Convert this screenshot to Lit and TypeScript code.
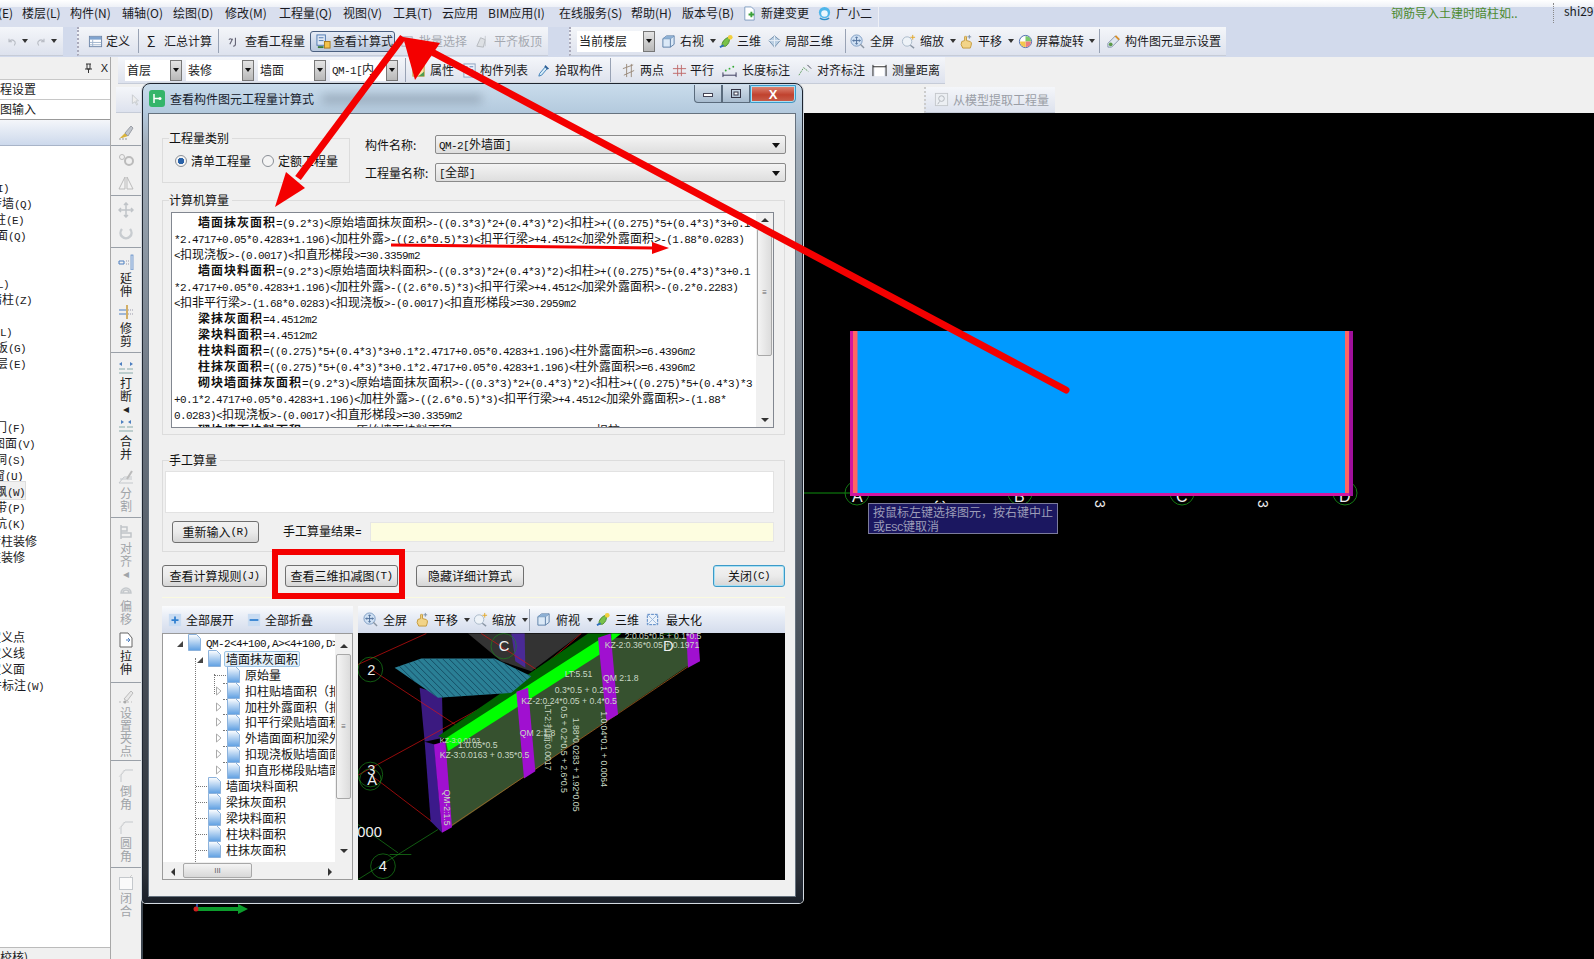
import { LitElement, html, svg, css } from "lit";
import { customElement } from "lit/decorators.js";

const CJK = css`"Noto Sans CJK SC", "Liberation Sans", sans-serif`;

// half-width latin runs, the old dialogs use a fixed 6px advance
const latCss = css`
  .lat {
    font-family: "Liberation Mono", monospace;
    font-size: 11px;
    letter-spacing: -0.6px;
  }
`;
const mixed = (s: string) =>
  s.split(/([\x20-\x7e]+)/).map((p, i) => (i % 2 ? html`<span class="lat">${p}</span>` : p));

const ic = (body: unknown, size = 16) =>
  html`<svg width=${size} height=${size} viewBox="0 0 16 16" style="flex:none">${body}</svg>`;

const icons: Record<string, unknown> = {
  table: svg`<rect x="1.5" y="2.5" width="13" height="11" fill="#fff" stroke="#6d86a8"/><rect x="2" y="3" width="12" height="3" fill="#7fa3cf"/><path d="M5 6v7M2 9h12M2 11.500h12" stroke="#9db2cc"/>`,
  calc: svg`<path d="M3 11l3-6M2 6q2-2 3 0M9 4v7q0 2-2.500 2" fill="none" stroke="#667" stroke-width="1.200"/>`,
  sheet: svg`<rect x="1" y="1" width="9" height="11" fill="#dfe8f5" stroke="#4d78b0"/><path d="M3 4h5M3 7h5" stroke="#4d78b0"/><rect x="9" y="8" width="6" height="7" fill="#f3c24b" stroke="#a87a1c"/><path d="M2 14h6" stroke="#3a7a3a" stroke-width="2"/>`,
  batch: svg`<rect x="2" y="3" width="11" height="10" fill="#e4e7ec" stroke="#aab"/><path d="M4 6h7M4 9h7" stroke="#bbc"/>`,
  align: svg`<path d="M3 13l4-9 5 2-2 8z" fill="#dde0e4" stroke="#b4b8bd"/><path d="M12 2v11" stroke="#c8ccd0"/>`,
  cube: svg`<path d="M2 5l4-3h8v9l-4 3H2z" fill="#dbe9f7" stroke="#5c7fa6"/><path d="M2 5h8v9M10 5l4-3" fill="none" stroke="#5c7fa6"/><path d="M2 5l4-3h8l-4 3z" fill="#8db0d4"/>`,
  tree3d: svg`<path d="M3 13q0-7 8-10 1 7-4 10z" fill="#78c24a" stroke="#4a8a2a"/><circle cx="12" cy="3.500" r="2.500" fill="#f2cf3e"/><path d="M1 14l4-2" stroke="#2f6fc0" stroke-width="2"/>`,
  diamond: svg`<path d="M8 2l6 5-6 7-6-7z" fill="#b9cee2" stroke="#7390ad"/><path d="M2 7h12M8 2v12" stroke="#e8f0f7"/>`,
  full: svg`<circle cx="7" cy="7" r="6" fill="#cfe0f3" stroke="#7d9cc2"/><path d="M7 3v8M3 7h8M5.800 4.200L7 3l1.200 1.200M5.800 9.800L7 11l1.200-1.200M4.200 5.800L3 7l1.200 1.200M9.800 5.800L11 7l-1.200 1.200" fill="none" stroke="#4f6f9a"/><path d="M11 11l4 4" stroke="#8a96a4" stroke-width="1.500"/>`,
  zoom: svg`<circle cx="6.500" cy="8" r="5" fill="#eef3f8" stroke="#a8b8c8"/><path d="M10 12l4 3" stroke="#8a96a4" stroke-width="1.500"/><path d="M12.500 1v5M10 3.500h5" stroke="#e2a72a"/>`,
  hand: svg`<path d="M4 15q-3-4-1-7l3-1V3q1-2 2 0v4l4 1q2 1 1 4l-1 3z" fill="#f2d488" stroke="#c49a3c"/><path d="M11 1v4M9 3h4" stroke="#7a8fa8"/>`,
  spin: svg`<circle cx="8" cy="8" r="6.500" fill="#fff" stroke="#46a"/><path d="M8 2a6 6 0 0 1 6 6H8z" fill="#7bc96a"/><path d="M14 8a6 6 0 0 1-6 6V8z" fill="#ec7f7f"/><path d="M8 14a6 6 0 0 1-6-6h6z" fill="#f3c84f"/>`,
  show: svg`<path d="M2 10l8-8 4 4-8 8H2z" fill="#dfe6f0" stroke="#8394ab"/><path d="M10 2l4 4" stroke="#d8902c" stroke-width="2"/><circle cx="5" cy="11" r="2" fill="#5b9a4a"/>`,
  attr: svg`<rect x="2" y="2" width="12" height="12" fill="#f6e3a8" stroke="#c29a3a"/><path d="M4 5h8M4 8h5" stroke="#b07a20"/><path d="M8 14l6-5v5z" fill="#4f9d4f"/>`,
  list: svg`<rect x="2" y="1" width="12" height="14" fill="#eef3fa" stroke="#8aa0bd"/><path d="M4 4h2M8 4h4M4 7h2M8 7h4M4 10h2M8 10h4" stroke="#5a82b8"/>`,
  pick: svg`<path d="M3 14l1-3 6-7 2 2-6 7z" fill="#d7ecf8" stroke="#3f7fb8"/><path d="M10 2l4 4-2 1-3-3z" fill="#2d5f96"/>`,
  twop: svg`<path d="M2 6l11-4M3 13L14 8M6 1v14M11 1v14" stroke="#9a8a7a"/>`,
  para: svg`<path d="M1 6h14M1 11h14M6 2v12M10 2v12" stroke="#c06a6a"/>`,
  len: svg`<path d="M1 13h14M1 10v5M15 10v5" stroke="#335"/><circle cx="4" cy="8" r="1" fill="#3a3"/><circle cx="8" cy="6" r="1" fill="#3a3"/><circle cx="12" cy="4" r="1" fill="#3a3"/>`,
  alignm: svg`<path d="M1 13l5-8 5 4" fill="none" stroke="#5a9a5a" stroke-dasharray="2 1"/><path d="M10 2l4 4" stroke="#445"/>`,
  meas: svg`<rect x="3" y="2" width="10" height="12" fill="#fff"/><path d="M1 2v12M15 2v12M1 4h14" stroke="#222"/>`,
  cursor: svg`<path d="M5 2v10l3-2 2 4 1-1-2-4h3z" fill="#eee" stroke="#c4c8cc"/>`,
  model: svg`<rect x="1.500" y="1.500" width="13" height="13" fill="#eceff3" stroke="#c4c8cc"/><circle cx="8" cy="7" r="3" fill="none" stroke="#b0b4ba"/><path d="M6 10l-2 3" stroke="#b0b4ba"/>`,
  undo: svg`<path d="M4 5v4h4M4 9q4-5 8 0q1 2-1 5" fill="none" stroke="#b8bcc4" stroke-width="1.500"/>`,
  redo: svg`<path d="M12 5v4H8M12 9q-4-5-8 0q-1 2 1 5" fill="none" stroke="#b8bcc4" stroke-width="1.500"/>`,
  newdoc: svg`<path d="M3 1h7l3 3v11H3z" fill="#fff" stroke="#7f9cc0"/><path d="M7 9h6M10 6v6" stroke="#3aa03a" stroke-width="2"/>`,
  bot: svg`<circle cx="8" cy="7" r="6" fill="#4fb6ea"/><circle cx="8" cy="8" r="3.500" fill="#eaf7fd"/><path d="M3 13q5 3 10 0" stroke="#2c8fc8" fill="none" stroke-width="1.500"/>`,
  plus: svg`<rect x="1" y="1" width="14" height="14" fill="#c9dcf2"/><path d="M8 4v8M4 8h8" stroke="#2f7fd0" stroke-width="2"/>`,
  minus: svg`<rect x="1" y="1" width="14" height="14" fill="#c9dcf2"/><path d="M3 8h10" stroke="#2f7fd0" stroke-width="2"/>`,
  max: svg`<rect x="2.500" y="2.500" width="11" height="11" fill="#eaf1fa" stroke="#4d7fc0" stroke-dasharray="3 1"/><path d="M3 3l10 10M13 3L3 13" stroke="#9ab8dc"/>`,
  // side strip
  brush: svg`<path d="M2 14l5-5 3 3-6 2z" fill="#d8b23c"/><path d="M7 9l6-7 2 2-5 8z" fill="#c2c6cc" stroke="#9a9ea6"/><path d="M1 15h8" stroke="#999" stroke-dasharray="2 1"/>`,
  oo: svg`<circle cx="4" cy="5" r="2.500" fill="none" stroke="#bbb"/><circle cx="11" cy="9" r="4" fill="none" stroke="#bbb" stroke-width="2"/>`,
  mirror: svg`<path d="M7 2v12L1 14zM9 2v12h6z" fill="#f2f2f2" stroke="#bbb"/>`,
  move: svg`<path d="M8 1v14M1 8h14M6 3l2-2 2 2M6 13l2 2 2-2M3 6L1 8l2 2M13 6l2 2-2 2" fill="none" stroke="#c0c4c8" stroke-width="1.500"/>`,
  rot: svg`<path d="M4 5a5.500 5.500 0 1 0 8 0" fill="none" stroke="#c8ccd0" stroke-width="2.500"/>`,
  extend: svg`<path d="M1 7h5v3H1z" fill="none" stroke="#4d7fc0"/><path d="M8 7h4M8 10h4" stroke="#99a" stroke-dasharray="1 1"/><rect x="13" y="1" width="2" height="15" fill="#dfe8f4" stroke="#4d7fc0" stroke-width=".7"/>`,
  trim: svg`<path d="M1 6h7M1 10h7" stroke="#4d7fc0"/><path d="M9 1v14" stroke="#c89a3a" stroke-width="1.500"/><path d="M10 6h5M10 10h5" stroke="#99a" stroke-dasharray="1 1"/>`,
  brk: svg`<path d="M1 10h6M9 10h6M1 14h14" stroke="#8aa"/><path d="M1 5l3-2v4zM15 5l-3-2v4z" fill="#4d7fc0"/>`,
  join: svg`<path d="M1 10h6M9 10h6M1 14h14" stroke="#8aa"/><path d="M6 5L3 3v4zM10 5l3-2v4z" fill="#4d7fc0"/>`,
  split: svg`<path d="M1 14l5-6h8M2 10h12M1 14h14" fill="none" stroke="#c4c8cc"/><path d="M9 10l5-8" stroke="#bbb" stroke-width="2"/>`,
  al: svg`<path d="M3 1v14M3 3h6v4H3zM3 9h10v4H3z" fill="none" stroke="#c0c4c8" stroke-width="1.500"/>`,
  off: svg`<path d="M3 11a5 5 0 1 1 10 0zM5 11a3 3 0 1 1 6 0z" fill="none" stroke="#c4c8cc" stroke-width="1.500"/>`,
  stretch: svg`<path d="M2 1h8l4 5v9H2z" fill="#fff" stroke="#666"/><path d="M8 8h4M10 6l2 2-2 2" stroke="#4d7fc0" fill="none"/>`,
  grip: svg`<path d="M6 10L13 2l2 2-6 8z" fill="#e8e8e8" stroke="#bbb"/><path d="M1 13h13" stroke="#bbb" stroke-dasharray="2 2"/><circle cx="7" cy="13" r="1.500" fill="#aaa"/>`,
  corner: svg`<path d="M3 15V8l4-5h8" fill="none" stroke="#c4c8cc"/><path d="M1 10l5-7" stroke="#ddd"/>`,
  closed: svg`<rect x="1.500" y="3.500" width="13" height="12" fill="#fafafa" stroke="#c4c8cc"/><path d="M11 4l3-3" stroke="#ccc"/>`,
};

const doc = html`<svg width="13" height="17" viewBox="0 0 13 17" style="flex:none">
  <defs><linearGradient id="d" x1="0" y1="0" x2="0" y2="1"><stop offset="0" stop-color="#fff"/><stop offset="1" stop-color="#5e9fe2"/></linearGradient></defs>
  <path d="M.5.5h8l4 4v12H.5z" fill="url(#d)" stroke="#8cb2dc"/>
</svg>`;

const MENU: [number, string][] = [
  [-26, "编辑(E)"], [22, "楼层(L)"], [70, "构件(N)"], [122, "辅轴(O)"], [173, "绘图(D)"], [225, "修改(M)"],
  [279, "工程量(Q)"], [343, "视图(V)"], [393, "工具(T)"], [442, "云应用"], [488, "BIM应用(I)"],
  [559, "在线服务(S)"], [631, "帮助(H)"], [682, "版本号(B)"],
];

type Tool = { x: number; i?: string; t?: string; off?: boolean; drop?: boolean; sep?: boolean; on?: boolean; s?: string; tx?: number };

const TB2: Tool[] = [
  { x: 88, i: "table", t: "定义", tx: 106 },
  { x: 138, sep: true },
  { x: 147, s: "Σ", t: "汇总计算", tx: 164 },
  { x: 218, sep: true },
  { x: 227, i: "calc", t: "查看工程量", tx: 245 },
  { x: 310, i: "sheet", t: "查看计算式", on: true, tx: 327 },
  { x: 400, i: "batch", t: "批量选择", off: true, tx: 419 },
  { x: 474, i: "align", t: "平齐板顶", off: true, tx: 494 },
];
const TB3: Tool[] = [
  { x: 661, i: "cube", t: "右视", drop: true, tx: 680 },
  { x: 719, i: "tree3d", t: "三维", tx: 737 },
  { x: 767, i: "diamond", t: "局部三维", tx: 785 },
  { x: 845, sep: true },
  { x: 850, i: "full", t: "全屏", tx: 870 },
  { x: 901, i: "zoom", t: "缩放", drop: true, tx: 920 },
  { x: 959, i: "hand", t: "平移", drop: true, tx: 978 },
  { x: 1018, i: "spin", t: "屏幕旋转", drop: true, tx: 1036 },
  { x: 1099, sep: true },
  { x: 1106, i: "show", t: "构件图元显示设置", tx: 1125 },
];
const TB4: Tool[] = [
  { x: 405, sep: true },
  { x: 411, i: "attr", t: "属性", tx: 430 },
  { x: 462, i: "list", t: "构件列表", tx: 480 },
  { x: 536, i: "pick", t: "拾取构件", tx: 555 },
  { x: 610, sep: true },
  { x: 621, i: "twop", t: "两点", tx: 640 },
  { x: 672, i: "para", t: "平行", tx: 690 },
  { x: 722, i: "len", t: "长度标注", tx: 742 },
  { x: 798, i: "alignm", t: "对齐标注", tx: 817 },
  { x: 872, i: "meas", t: "测量距离", tx: 892 },
];
const TB3D: Tool[] = [
  { x: 363, i: "full", t: "全屏", tx: 383 },
  { x: 415, i: "hand", t: "平移", drop: true, tx: 434 },
  { x: 473, i: "zoom", t: "缩放", drop: true, tx: 492 },
  { x: 529, sep: true },
  { x: 536, i: "cube", t: "俯视", drop: true, tx: 556 },
  { x: 596, i: "tree3d", t: "三维", tx: 615 },
  { x: 645, i: "max", t: "最大化", tx: 666 },
];

const toolRow = (items: Tool[], end: number) =>
  items.map((it, n) => {
    const w = (items[n + 1]?.x ?? end) - it.x - (it.on ? 5 : 0);
    if (it.sep) return html`<span class="tsep" style="width:${w}px"></span>`;
    const gap = (it.tx ?? it.x + 18) - it.x - (it.s ? 10 : 15);
    return html`<span class="tool ${it.off ? "off" : ""} ${it.on ? "on" : ""}" style="width:${w}px;gap:${gap}px">
      ${it.i ? ic(icons[it.i], 15) : html`<span class="sig">${it.s}</span>`}
      <span>${it.t}</span>${it.drop ? html`<i class="caret"></i>` : ""}
    </span>`;
  });

// [text, left offset] for the tree that is scrolled off the left edge of the panel
const NAV: [string, number][] = [
  ["柱(I)", -21], ["砖墙(Q)", -10], ["柱(E)", -6], ["墙面(Q)", -16], ["", 0], ["", 0],
  ["梁(L)", -21], ["暗柱(Z)", -10], ["", 0], ["板(L)", -18], ["板(G)", -4], ["层(E)", -4],
  ["", 0], ["", 0], ["", 0], ["门(F)", -5], ["图面(V)", -7], ["洞(S)", -5], ["窗(U)", -7],
  ["飘(W)", -5], ["带(P)", -5], ["坑(K)", -5], ["砖柱装修", -11], ["柱装修", -11],
  ["", 0], ["", 0], ["", 0], ["", 0],
  ["自定义点", -23], ["自定义线", -23], ["自定义面", -23], ["构件标注(W)", -22],
];

// strip tools: y start, icon, label, dark text, rule under it
const STRIP: [number, string, string, boolean, boolean][] = [
  [118, "brush", "", false, true],
  [146, "oo", "", false, false],
  [169, "mirror", "", false, true],
  [196, "move", "", false, false],
  [218, "rot", "", false, true],
  [248, "extend", "延伸", true, false],
  [298, "trim", "修剪", true, true],
  [353, "brk", "打断◂", true, false],
  [411, "join", "合并", true, false],
  [463, "split", "分割", false, true],
  [518, "al", "对齐◂", false, false],
  [576, "off", "偏移", false, false],
  [626, "stretch", "拉伸", true, true],
  [683, "grip", "设置夹点", false, true],
  [761, "corner", "倒角", false, false],
  [813, "corner", "圆角", false, true],
  [868, "closed", "闭合", false, false],
];

const caretSvg = (d: string) => html`<svg width="8" height="8" viewBox="0 0 8 8"><path d=${d} fill="#333"/></svg>`;

const FORMULA: { b?: string; t: string }[] = [
  { b: "墙面抹灰面积", t: "=(9.2*3)<原始墙面抹灰面积>-((0.3*3)*2+(0.4*3)*2)<扣柱>+((0.275)*5+(0.4*3)*3+0.1" },
  { t: "*2.4717+0.05*0.4283+1.196)<加柱外露>-((2.6*0.5)*3)<扣平行梁>+4.4512<加梁外露面积>-(1.88*0.0283)" },
  { t: "<扣现浇板>-(0.0017)<扣直形梯段>=30.3359m2" },
  { b: "墙面块料面积", t: "=(9.2*3)<原始墙面块料面积>-((0.3*3)*2+(0.4*3)*2)<扣柱>+((0.275)*5+(0.4*3)*3+0.1" },
  { t: "*2.4717+0.05*0.4283+1.196)<加柱外露>-((2.6*0.5)*3)<扣平行梁>+4.4512<加梁外露面积>-(0.2*0.2283)" },
  { t: "<扣非平行梁>-(1.68*0.0283)<扣现浇板>-(0.0017)<扣直形梯段>=30.2959m2" },
  { b: "梁抹灰面积", t: "=4.4512m2" },
  { b: "梁块料面积", t: "=4.4512m2" },
  { b: "柱块料面积", t: "=((0.275)*5+(0.4*3)*3+0.1*2.4717+0.05*0.4283+1.196)<柱外露面积>=6.4396m2" },
  { b: "柱抹灰面积", t: "=((0.275)*5+(0.4*3)*3+0.1*2.4717+0.05*0.4283+1.196)<柱外露面积>=6.4396m2" },
  { b: "砌块墙面抹灰面积", t: "=(9.2*3)<原始墙面抹灰面积>-((0.3*3)*2+(0.4*3)*2)<扣柱>+((0.275)*5+(0.4*3)*3" },
  { t: "+0.1*2.4717+0.05*0.4283+1.196)<加柱外露>-((2.6*0.5)*3)<扣平行梁>+4.4512<加梁外露面积>-(1.88*" },
  { t: "0.0283)<扣现浇板>-(0.0017)<扣直形梯段>=30.3359m2" },
  { b: "砌块墙面块料面积", t: "=(9.2*3)<原始墙面块料面积>-((0.3*3)*2+(0.4*3)*2)<扣柱>+((0.275)*5+(0.4*3)*3" },
];

const TREE: { l: number; t: string; exp?: string; cur?: boolean }[] = [
  { l: 0, t: "QM-2<4+100,A><4+100,D>", exp: "open" },
  { l: 1, t: "墙面抹灰面积", exp: "open", cur: true },
  { l: 2, t: "原始量" },
  { l: 2, t: "扣柱贴墙面积（扣", exp: "closed" },
  { l: 2, t: "加柱外露面积（扣", exp: "closed" },
  { l: 2, t: "扣平行梁贴墙面积", exp: "closed" },
  { l: 2, t: "外墙面面积加梁外", exp: "closed" },
  { l: 2, t: "扣现浇板贴墙面面", exp: "closed" },
  { l: 2, t: "扣直形梯段贴墙面", exp: "closed" },
  { l: 1, t: "墙面块料面积" },
  { l: 1, t: "梁抹灰面积" },
  { l: 1, t: "梁块料面积" },
  { l: 1, t: "柱块料面积" },
  { l: 1, t: "柱抹灰面积" },
];

const stairs = Array.from({ length: 24 }, (_, n) => n);

// 3d preview, coordinates read off the reference at 3x
const scene = html`<svg class="scene" viewBox="10 87 1281 738" font-family="Liberation Sans, sans-serif">
  <defs><clipPath id="st"><path d="M120 190L200 162H420L530 215 470 265 250 280Z"/></clipPath></defs>
  <path d="M340 87H680L530 200 440 170Z" fill="#333"/>
  <path d="M195 250L262 270 265 400 210 412Z" fill="#3b1a80"/>
  <path d="M470 87H510L512 190 482 170Z" fill="#4a2a96"/>
  <g stroke="#e01010" stroke-width="2" fill="none">
    <path d="M10 180L215 87M10 512L490 250 680 87M50 195L500 490M60 520L250 665M380 87L545 195M700 300L760 345"/>
  </g>
  <g stroke="#1a8a1a" stroke-width="2" fill="none">
    <circle cx="47" cy="195" r="37"/><circle cx="47" cy="510" r="37"/><circle cx="85" cy="785" r="37"/>
    <circle cx="447" cy="125" r="38"/><circle cx="940" cy="125" r="38"/><circle cx="47" cy="525" r="32"/>
    <path d="M250 675L10 825M10 660L130 745M105 750H170"/>
  </g>
  <path d="M270 410L730 100H1010L1020 170 270 680Z" fill="#36512f"/>
  <path d="M280 670L1010 180" stroke="#c06a20" stroke-width="2"/>
  <path d="M250 395L700 87H790L272 402Z" fill="#006200"/>
  <path d="M272 402L735 105 735 150 280 440Z" fill="#00ff00"/>
  <path d="M800 87L770 110V87Z" fill="#00ff00"/>
  <path d="M120 190L200 162H420L530 215 470 265 250 280Z" fill="#2a7f95"/>
  <g clip-path="url(#st)" stroke="#164f66" stroke-width="3">
    ${stairs.map((n) => svg`<path d="M${90 + n * 19} 160L${215 + n * 19} 285"/>`)}
  </g>
  <path d="M210 412L240 420 262 685 228 650Z" fill="#3b1a8a"/>
  <path d="M238 420L272 410 292 668 262 685Z" fill="#a010d0"/>
  <path d="M485 262L520 250 542 500 508 522Z" fill="#a010d0"/>
  <path d="M730 100L768 87 790 330 755 350Z" fill="#a010d0"/>
  <path d="M995 87H1030L1036 170 1000 190Z" fill="#a010d0"/>
  <g fill="#c9d8c4" font-size="26">
    <text x="255" y="415" font-size="22">KZ-3:0.0163</text>
    <text x="310" y="431">1:0.05*0.5</text>
    <text x="255" y="461">KZ-3:0.0163 + 0.35*0.5</text>
    <text x="495" y="395">QM 2:1.8</text>
    <text x="500" y="298">KZ-2:0.24*0.05 + 0.4*0.5</text>
    <text x="745" y="230">QM 2:1.8</text>
    <text x="600" y="266">0.3*0.5 + 0.2*0.5</text>
    <text x="630" y="216">LT:5.51</text>
    <text x="750" y="130">KZ-2:0.36*0.05 + 0.1971</text>
    <text x="810" y="102">2:0.05*0.5 + 0.1*0.5</text>
    <text transform="translate(268 555) rotate(90)">QM-2:1.5</text>
    <text transform="translate(572 300) rotate(90)">LT-2:扣面:0.0017</text>
    <text transform="translate(618 305) rotate(90)">0.5 + 0.2*0.5 + 2.6*0.5</text>
    <text transform="translate(655 340) rotate(90)">1.88*0.0283 + 1.92*0.05</text>
    <text transform="translate(738 320) rotate(90)">1.0:04*0.1 + 0.0064</text>
  </g>
  <g fill="#f0f0f0" font-size="44">
    <text x="8" y="698">000</text><text x="38" y="211">2</text><text x="38" y="512">3</text>
    <text x="38" y="540">A</text><text x="72" y="800">4</text><text x="432" y="138">C</text><text x="925" y="138">D</text>
  </g>
</svg>`;

@customElement("calc-dialog")
export class CalcDialog extends LitElement {
  static styles = [
    latCss,
    css`
      :host {
        display: block;
        width: 661px;
        height: 820px;
        box-sizing: border-box;
        border: 1px solid #1e2530;
        border-radius: 8px 8px 4px 4px;
        padding: 0 6px 5px 5px;
        background: linear-gradient(180deg, #c9dcec 0, #b4cade 28px, #a2aeba 60px, #6c7682 320px, #2a3038 790px, #1a1f28 100%);
        box-shadow: 0 0 0 1px #d4dae0;
        font: 12px/16px ${CJK};
        color: #111;
      }
      * {
        box-sizing: border-box;
      }
    `,
    css`
      .title {
        height: 29px;
        display: flex;
        align-items: center;
        font-size: 12px;
        color: #16202c;
      }
      .logo {
        margin: 0 5px 0 1px;
      }
      .smear {
        width: 160px;
        height: 10px;
        margin-left: 8px;
        background: #8797a8;
        filter: blur(5px);
        opacity: 0.6;
      }
      .wbtns {
        margin-left: auto;
        align-self: flex-start;
        margin-top: 1px;
        display: flex;
        height: 18px;
      }
      .wb {
        width: 28px;
        border: 1px solid #5a6b7c;
        border-top: none;
        background: linear-gradient(180deg, #d4e0ec, #a8bccf);
        display: flex;
        align-items: center;
        justify-content: center;
      }
      .wb.min {
        border-radius: 0 0 0 4px;
      }
      .wb.close {
        width: 46px;
        border-radius: 0 0 4px 0;
        background: linear-gradient(180deg, #e08a78, #c0422e 55%, #c8604c);
        color: #fff;
        font: bold 13px "Liberation Sans", sans-serif;
      }
      .inner {
        height: 784px;
        background: #f0f0f0;
        border: 1px solid #66727e;
        padding: 21px 10px 0 13px;
      }
      .head {
        display: flex;
        height: 47px;
      }
      .group {
        position: relative;
        border: 1px solid #dcdcdc;
      }
      .legend {
        position: absolute;
        left: 6px;
        top: -9px;
        background: #f0f0f0;
        padding-right: 3px;
      }
      .kind {
        width: 188px;
        height: 45px;
        margin-top: 3px;
        display: flex;
        align-items: center;
        padding-left: 12px;
      }
      .radio {
        width: 12px;
        height: 12px;
        border-radius: 50%;
        border: 1px solid #8a8f96;
        background: #f4f4f4;
        margin-right: 4px;
        flex: none;
      }
      .radio.on {
        background: radial-gradient(circle, #2a62a8 0 3px, #f4f4f4 3.5px);
      }
      .radio.second {
        margin-left: 11px;
      }
      .fields {
        margin-left: 15px;
        flex: 1;
        display: flex;
        flex-direction: column;
        gap: 9px;
      }
      .field {
        display: flex;
        align-items: center;
        height: 19px;
        margin-right: -1px;
      }
      .field label {
        width: 70px;
      }
      .sel {
        flex: 1;
        height: 19px;
        border: 1px solid #8a8a8a;
        border-radius: 2px;
        background: linear-gradient(180deg, #f4f4f4, #dedede);
        display: flex;
        align-items: center;
        justify-content: space-between;
        padding: 0 5px 0 3px;
      }
      .tri {
        border: 4px solid transparent;
        border-top: 5px solid #111;
        margin-top: 5px;
      }
      .computer {
        margin-top: 18px;
        height: 235px;
        padding: 11px 10px 0 8px;
      }
      .formula {
        height: 216px;
        border: 1px solid #828790;
        background: #fff;
        display: flex;
      }
      .lines {
        flex: 1;
        overflow: hidden;
        padding-left: 2px;
        padding-top: 1px;
      }
      .ln {
        height: 16px;
        line-height: 16px;
        white-space: nowrap;
      }
      .ln.ind {
        padding-left: 24px;
      }
      .ln b {
        font-weight: 700;
        letter-spacing: 1px;
      }
      .vs {
        width: 17px;
        flex: none;
        background: #f0f0f0;
        display: flex;
        flex-direction: column;
        align-items: center;
      }
      .ar {
        height: 14px;
        flex: none;
        display: flex;
        align-items: center;
      }
      .thumb {
        width: 15px;
        background: linear-gradient(90deg, #f4f4f4, #dcdcdc);
        border: 1px solid #a8a8a8;
        border-radius: 2px;
        display: flex;
        align-items: center;
        justify-content: center;
        font: 8px/8px "Liberation Sans", sans-serif;
        color: #666;
      }
      .sp {
        flex: 1;
      }
      .manual {
        margin-top: 25px;
        height: 92px;
        padding: 10px 10px 0 2px;
      }
      .input {
        height: 42px;
        background: #fff;
        border: 1px solid #e2e2e2;
      }
      .result {
        display: flex;
        align-items: center;
        margin-top: 8px;
        height: 22px;
        padding-left: 7px;
      }
      .btn {
        height: 22px;
        flex: none;
        border: 1px solid #707070;
        border-radius: 3px;
        background: linear-gradient(180deg, #f2f2f2 0, #ebebeb 50%, #d6d6d6 100%);
        display: flex;
        align-items: center;
        justify-content: center;
        white-space: nowrap;
      }
      .yellow {
        flex: 1;
        height: 20px;
        margin-left: 9px;
        background: #fdfde0;
        border: 1px solid #e6e6e6;
      }
      .btns {
        margin-top: 13px;
        display: flex;
        align-items: center;
      }
      .close {
        border: 1px solid #3c9ac8;
        box-shadow: inset 0 0 0 1px #a8e0f4;
      }
      .rule {
        margin-top: 10px;
        height: 1px;
        background: #fafae0;
      }
      .lower {
        margin-top: 8px;
        display: flex;
        gap: 5px;
        height: 274px;
      }
      .tbar {
        height: 27px;
        background: linear-gradient(180deg, #fafbfd, #e8edf6 40%, #d4dcec);
        display: flex;
        align-items: center;
        flex: none;
      }
      .tool {
        display: flex;
        align-items: center;
        flex: none;
        white-space: nowrap;
      }
      .tsep {
        flex: none;
        height: 22px;
        border-left: 1px solid #9aa4b4;
      }
      .sig {
        width: 10px;
      }
      .caret {
        border: 3px solid transparent;
        border-top: 4px solid #333;
        margin: 3px 0 0 2px;
      }
      .treebox {
        width: 191px;
        display: flex;
        flex-direction: column;
      }
      .treebox .tbar {
        padding-left: 6px;
        gap: 4px;
      }
      .tree {
        flex: 1;
        border: 1px solid #9a9a9a;
        background: #fff;
        display: flex;
        flex-direction: column;
        min-height: 0;
      }
      .tree-body {
        flex: 1;
        display: flex;
        min-height: 0;
      }
      .rows {
        flex: 1;
        position: relative;
        overflow: hidden;
        padding-top: 1px;
      }
      .row {
        height: 15.900px;
        display: flex;
        align-items: center;
        white-space: nowrap;
      }
      .row.l0 {
        padding-left: 25px;
      }
      .row.l1 {
        padding-left: 45px;
      }
      .row.l2 {
        padding-left: 64px;
      }
      .exp {
        width: 0;
        position: relative;
        left: -12px;
      }
      .dash {
        position: absolute;
        left: 0;
        top: 0;
        width: 11px;
        border-top: 1px dotted #777;
      }
      .short {
        position: absolute;
        left: 8px;
        top: 0;
        width: 4px;
        border-top: 1px dotted #777;
      }
      .dots {
        position: absolute;
        border-left: 1px dotted #777;
        width: 0;
      }
      .dots.a {
        left: 32px;
        top: 24px;
        bottom: 0;
      }
      .dots.b {
        left: 51px;
        top: 40px;
        height: 20px;
      }
      .rowtxt {
        margin-left: 4px;
        padding: 0 1px;
      }
      .row.cur .rowtxt {
        border: 1px solid #9cc4e4;
        border-radius: 2px;
        background: linear-gradient(180deg, #f2f8fd, #dcecf9);
        line-height: 14px;
        margin-left: 3px;
      }
      .hs {
        height: 17px;
        background: #f0f0f0;
        display: flex;
        align-items: center;
        flex: none;
      }
      .hthumb {
        width: 69px;
        height: 15px;
        margin-left: 6px;
        background: linear-gradient(180deg, #f4f4f4, #d8d8d8);
        border: 1px solid #a8a8a8;
        border-radius: 2px;
        font: 8px/13px "Liberation Sans", sans-serif;
        color: #666;
        text-align: center;
      }
      .preview {
        flex: 1;
        display: flex;
        flex-direction: column;
      }
      .preview .tbar {
        padding-left: 5px;
      }
      .scene {
        display: block;
        width: 427px;
        height: 247px;
        background: #000;
      }
    `,
  ];

  render() {
    return html`
      <div class="title">
        <svg class="logo" width="16" height="17" viewBox="0 0 16 17">
          <rect width="16" height="17" rx="3" fill="#35b56a" />
          <path d="M5 4v9M5 8.500h5" stroke="#fff" stroke-width="1.500" />
          <circle cx="11" cy="8.500" r="1.500" fill="#fff" />
        </svg>
        查看构件图元工程量计算式
        <span class="smear"></span>
        <div class="wbtns">
          <div class="wb min"><svg width="10" height="6"><rect x=".5" y="2.500" width="9" height="3" fill="#fff" stroke="#445"/></svg></div>
          <div class="wb"><svg width="10" height="9"><rect x=".5" y=".5" width="9" height="8" fill="none" stroke="#334"/><rect x="3" y="3" width="4" height="3" fill="#fff" stroke="#334"/></svg></div>
          <div class="wb close">X</div>
        </div>
      </div>
      <div class="inner">
        <div class="head">
          <div class="group kind">
            <span class="legend">工程量类别</span>
            <span class="radio on"></span>清单工程量 <span class="radio second"></span>定额工程量
          </div>
          <div class="fields">
            <div class="field"><label>构件名称:</label><div class="sel"><span>${mixed("QM-2[外墙面]")}</span><i class="tri"></i></div></div>
            <div class="field"><label>工程量名称:</label><div class="sel"><span>${mixed("[全部]")}</span><i class="tri"></i></div></div>
          </div>
        </div>
        <div class="group computer">
          <span class="legend">计算机算量</span>
          <div class="formula">
            <div class="lines">
              ${FORMULA.map(
                (f) => html`<div class="ln ${f.b ? "ind" : ""}">${f.b ? html`<b>${f.b}</b>` : ""}${mixed(f.t)}</div>`
              )}
            </div>
            <div class="vs">
              <div class="ar">${caretSvg("M0 6L4 2 8 6Z")}</div>
              <div class="thumb" style="height:127px;margin-top:2px">≡</div>
              <div class="sp"></div>
              <div class="ar">${caretSvg("M0 2L4 6 8 2Z")}</div>
            </div>
          </div>
        </div>
        <div class="group manual">
          <span class="legend">手工算量</span>
          <div class="input"></div>
          <div class="result">
            <div class="btn" style="width:87px">${mixed("重新输入(R)")}</div>
            <span style="margin-left:24px">手工算量结果${mixed("=")}</span>
            <div class="yellow"></div>
          </div>
        </div>
        <div class="btns">
          <div class="btn" style="width:105px">${mixed("查看计算规则(J)")}</div>
          <div class="btn" style="width:113px;margin-left:18px">${mixed("查看三维扣减图(T)")}</div>
          <div class="btn" style="width:108px;margin-left:18px">隐藏详细计算式</div>
          <div class="btn close" style="width:72px;margin-left:auto">${mixed("关闭(C)")}</div>
        </div>
        <div class="rule"></div>
        <div class="lower">
          <div class="treebox">
            <div class="tbar">
              ${ic(icons.plus, 14)}<span>全部展开</span>
              <span style="width:5px"></span>
              ${ic(icons.minus, 14)}<span>全部折叠</span>
            </div>
            <div class="tree">
              <div class="tree-body">
                <div class="rows">
                  <i class="dots a"></i><i class="dots b"></i>
                  ${TREE.map(
                    (r) => html`<div class="row l${r.l} ${r.cur ? "cur" : ""}">
                      <span class="exp">${r.exp === "open"
                        ? html`<svg width="8" height="8" viewBox="0 0 8 8"><path d="M1 7L7 1V7Z" fill="#444"/></svg>`
                        : r.exp === "closed"
                        ? html`<svg width="8" height="10" viewBox="0 0 8 10"><path d="M1.500 1L6 5 1.500 9Z" fill="#fff" stroke="#aaa"/></svg><i class="short"></i>`
                        : html`<i class="dash"></i>`}</span>
                      ${doc}<span class="rowtxt">${mixed(r.t)}</span>
                    </div>`
                  )}
                </div>
                <div class="vs">
                  <div class="ar" style="margin-top:5px">${caretSvg("M0 6L4 2 8 6Z")}</div>
                  <div class="thumb" style="height:145px;margin-top:1px">≡</div>
                  <div class="sp"></div>
                  <div class="ar" style="margin-bottom:4px">${caretSvg("M0 2L4 6 8 2Z")}</div>
                </div>
              </div>
              <div class="hs">
                <span style="margin-left:6px">${caretSvg("M6 0L2 4 6 8Z")}</span>
                <div class="hthumb">III</div>
                <span style="margin-left:auto;margin-right:18px">${caretSvg("M2 0L6 4 2 8Z")}</span>
              </div>
            </div>
          </div>
          <div class="preview">
            <div class="tbar">${toolRow(TB3D, 706)}</div>
            ${scene}
          </div>
        </div>
      </div>
    `;
  }
}

@customElement("app-root")
export class AppRoot extends LitElement {
  static styles = [
    latCss,
    css`
      :host {
        display: block;
        position: relative;
        width: 1594px;
        height: 959px;
        overflow: hidden;
        background: #f0f0f0;
        font: 12px/16px ${CJK};
        color: #1a1a22;
      }
      * {
        box-sizing: border-box;
      }
      .band {
        height: 7px;
        background: linear-gradient(180deg, #fff, #eef1f7);
      }
      .menubar {
        height: 20px;
        display: flex;
        background: #d2daec;
        align-items: center;
      }
      .menu {
        width: 879px;
        flex: none;
        height: 20px;
        padding-bottom: 8px;
        display: flex;
        align-items: center;
        background: #d9dfee;
        border-right: 1px solid #eef0f6;
        overflow: visible;
      }
      .mi {
        flex: none;
        white-space: nowrap;
      }
      .news {
        margin-left: 512px;
        margin-bottom: 8px;
        color: #4d8a2f;
        width: 162px;
        flex: none;
      }
      .user {
        border-left: 1px dotted #888;
        padding-left: 10px;
        white-space: nowrap;
        height: 20px;
        margin-bottom: 8px;
      }
      .bar2 {
        height: 30px;
        display: flex;
        background: #d2daec;
      }
      .tb {
        display: flex;
        align-items: center;
        flex: none;
        background: linear-gradient(180deg, #f4f6fa, #e9ecf3 50%, #dde2ee);
        border-bottom: 1px solid #c6ccd8;
      }
      .tb1 {
        width: 63px;
        height: 29px;
        padding-left: 6px;
        color: #aaa;
      }
      .tb2 {
        width: 471px;
        height: 29px;
        margin-left: 14px;
        padding-left: 9px;
        border-left: 2px dotted #aab;
      }
      .tb3 {
        width: 657px;
        height: 29px;
        margin-left: 21px;
        padding-left: 6px;
        border-left: 2px dotted #aab;
      }
      .tool {
        display: flex;
        align-items: center;
        flex: none;
        white-space: nowrap;
      }
      .tool.off {
        color: #a4a8b0;
      }
      .tool.on {
        height: 21px;
        padding-left: 5px;
        margin-right: 5px;
        border: 1px solid #4a5f80;
        border-radius: 3px;
        background: linear-gradient(180deg, #e6ecf6, #b9c8de);
      }
      .tsep {
        flex: none;
        height: 24px;
        border-left: 1px solid #98a2b4;
      }
      .sig {
        width: 10px;
        font-size: 14px;
      }
      .caret {
        border: 3px solid transparent;
        border-top: 4px solid #333;
        margin: 3px 0 0 2px;
      }
      .pick {
        display: flex;
        flex: none;
        height: 21px;
        background: #fff;
        align-items: center;
        justify-content: space-between;
        padding-left: 2px;
        margin-right: 4px;
        overflow: hidden;
        white-space: nowrap;
      }
      .pick i {
        width: 12px;
        height: 21px;
        flex: none;
        background: linear-gradient(180deg, #e4e4e4, #b8b8b8);
        border: 1px solid #777;
        display: flex;
        align-items: center;
        justify-content: center;
      }
      .pick i::after {
        content: "";
        border: 3px solid transparent;
        border-top: 4px solid #111;
        margin-top: 3px;
      }
      .body {
        display: flex;
        height: 902px;
      }
      .panel {
        width: 111px;
        flex: none;
        display: flex;
        flex-direction: column;
        border-right: 1px solid #a8a8a8;
      }
      .ptitle {
        height: 22px;
        display: flex;
        align-items: center;
        justify-content: flex-end;
        gap: 8px;
        padding-right: 2px;
        font: 11px "Liberation Sans", sans-serif;
      }
      .pitem {
        height: 20px;
        padding-top: 1px;
        border-top: 1px solid #c8c8c8;
        background: #fff;
        overflow: hidden;
        white-space: nowrap;
      }
      .pcur {
        height: 27px;
        flex: none;
        border-top: 1px solid #999;
        border-bottom: 1px solid #a8b4c8;
        background: linear-gradient(180deg, #f4f6fa, #cdd9ec);
      }
      .nav {
        flex: 1;
        background: #fff;
        padding-top: 33px;
        overflow: hidden;
      }
      .nv {
        height: 16px;
        line-height: 16px;
        white-space: nowrap;
      }
      .nv:nth-child(23) {
        margin-top: 2px;
      }
      .nv.hit .chip {
        background: #f0f0f0;
        box-shadow: 0 0 0 1px #ddd;
      }
      .pfoot {
        height: 12px;
        flex: none;
        padding-top: 2px;
        background: #f0f0f0;
        border-top: 1px solid #bbb;
        overflow: hidden;
        line-height: 14px;
      }
      .work {
        flex: 1;
        display: flex;
        flex-direction: column;
        min-width: 0;
      }
      .tb4 {
        width: 827px;
        height: 27px;
        margin-left: 7px;
        padding-left: 7px;
        flex: none;
      }
      .bar4 {
        height: 29px;
        flex: none;
        display: flex;
        align-items: flex-end;
      }
      .stub {
        width: 31px;
        height: 26px;
        margin-left: 5px;
        padding-left: 12px;
      }
      .fromModel {
        width: 131px;
        height: 26px;
        margin-left: 777px;
        padding-left: 8px;
        color: #9a9ea6;
        gap: 4px;
        border-left: 2px dotted #ccc;
      }
      .down {
        flex: 1;
        display: flex;
        min-height: 0;
      }
      .strip {
        width: 30px;
        flex: none;
        padding-top: 5px;
        display: flex;
        flex-direction: column;
        align-items: stretch;
      }
      .st {
        flex: none;
        padding-top: 6px;
        display: flex;
        flex-direction: column;
        align-items: center;
        color: #a0a4a8;
        line-height: 12.500px;
      }
      .st.dark {
        color: #222;
      }
      .st.rule {
        border-bottom: 1px solid #9aa0a8;
      }
      .st svg {
        margin-bottom: 2px;
      }
      .canvas {
        flex: 1;
        position: relative;
        background: #000;
        border-left: 2px solid #3d4650;
      }
      .canvas svg {
        position: absolute;
        left: 0;
        top: 0;
      }
      .hint {
        position: absolute;
        left: 725px;
        top: 390px;
        width: 190px;
        height: 31px;
        background: #1b1760;
        border: 1px solid #7c7c9c;
        color: #9c9cb8;
        font-size: 12px;
        line-height: 14px;
        padding: 1px 4px;
      }
      calc-dialog {
        position: absolute;
        left: 142px;
        top: 83px;
      }
      .marks {
        position: absolute;
        left: 0;
        top: 0;
        pointer-events: none;
      }
    `,
  ];

  render() {
    return html`
      <div class="band"></div>
      <div class="menubar">
        <div class="menu">
          ${MENU.map(([x, t], n) => {
            const next = MENU[n + 1]?.[0] ?? 742;
            return html`<span class="mi" style="width:${next - x}px;${n ? "" : `margin-left:${x}px`}">${t}</span>`;
          })}
          ${ic(icons.newdoc, 15)}<span class="mi" style="width:56px;margin-left:4px">新建变更</span>
          ${ic(icons.bot, 15)}<span class="mi" style="margin-left:4px">广小二</span>
        </div>
        <span class="news">钢筋导入土建时暗柱如..</span>
        <span class="user">shi29</span>
      </div>
      <div class="bar2">
        <div class="tb tb1">${ic(icons.undo, 12)}<i class="caret" style="margin:3px 7px 0 4px"></i>${ic(icons.redo, 12)}<i class="caret" style="margin:3px 0 0 4px"></i></div>
        <div class="tb tb2">${toolRow(TB2, 548)}</div>
        <div class="tb tb3">
          <span class="pick" style="width:78px;margin-right:6px">当前楼层<i></i></span>
          ${toolRow(TB3, 1226)}
        </div>
      </div>
      <div class="body">
        <div class="panel">
          <div class="ptitle">
            <svg width="9" height="11" viewBox="0 0 9 11"><path d="M2 1h5M3 1v5h3V1M1 6h7M4.500 6v4" stroke="#333" fill="none"/></svg>
            <span>X</span>
          </div>
          <div class="pitem" style="margin-left:-12px">工程设置</div>
          <div class="pitem" style="margin-left:-12px">绘图输入</div>
          <div class="pcur"></div>
          <div class="nav">
            ${NAV.map(
              ([t, x]) => html`<div class="nv ${t.includes("(W)") && x === -5 ? "hit" : ""}" style="margin-left:${x}px"><span class="chip">${mixed(t)}</span></div>`
            )}
          </div>
          <div class="pfoot">校核)</div>
        </div>
        <div class="work">
          <div class="tb tb4">
            <span class="pick" style="width:57px"><span>首层</span><i></i></span>
            <span class="pick" style="width:68px"><span>装修</span><i></i></span>
            <span class="pick" style="width:68px"><span>墙面</span><i></i></span>
            <span class="pick" style="width:68px;margin-right:7px"><span>${mixed("QM-1[内")}</span><i></i></span>
            ${toolRow(TB4, 945)}
          </div>
          <div class="bar4">
            <div class="tb stub">${ic(icons.cursor, 14)}</div>
            <div class="tb fromModel">${ic(icons.model, 15)}<span>从模型提取工程量</span></div>
          </div>
          <div class="down">
            <div class="strip">
              ${STRIP.map(([y, icon, label, dark, rule], n) => {
                const h = (STRIP[n + 1]?.[0] ?? 921) - y;
                return html`<div class="st ${dark ? "dark" : ""} ${rule ? "rule" : ""}" style="height:${h}px">
                  ${ic(icons[icon], 16)}
                  ${[...label].map((c) => html`<span>${c}</span>`)}
                </div>`;
              })}
            </div>
            <div class="canvas">
              <svg width="1451" height="846" viewBox="143 113 1451 846" font-family="Liberation Sans, sans-serif">
                <path d="M790 493H850" stroke="#0f8f0f" />
                <g fill="none" stroke="#137a13">
                  <circle cx="857" cy="493" r="12" /><circle cx="1020" cy="493" r="12" />
                  <circle cx="1182" cy="493" r="12" /><circle cx="1345" cy="493" r="12" />
                </g>
                <g fill="#eee" font-size="16">
                  <text x="852" y="502">A</text><text x="1014" y="502">B</text>
                  <text x="1176" y="502">C</text><text x="1339" y="502">D</text>
                  ${[940, 1100, 1263].map((x) => svg`<text transform="translate(${x} 500) rotate(90)" font-size="14" x="0" y="5">3</text>`)}
                </g>
                <rect x="850" y="331" width="503" height="165" fill="#d316a0" />
                <rect x="853" y="331" width="496" height="162" fill="#ff6464" />
                <rect x="857.500" y="331" width="487.500" height="162" fill="#009aff" />
                <rect x="1349" y="331" width="4" height="165" fill="#a0109c" />
                <path d="M197 903V908" stroke="#2a4a9a" stroke-width="2" />
                <path d="M198 909H241" stroke="#0c9c2c" stroke-width="4" />
                <path d="M238 904L248 909 238 914Z" fill="#0c9c2c" />
                <circle cx="196" cy="909" r="2.500" fill="#d02020" />
              </svg>
              <div class="hint">按鼠标左键选择图元，按右键中止<br />或${mixed("ESC")}键取消</div>
            </div>
          </div>
        </div>
      </div>
      <calc-dialog></calc-dialog>
      <svg class="marks" width="1594" height="959" viewBox="0 0 1594 959">
        <path d="M1066 390L432 52" stroke="#f40000" stroke-width="7" stroke-linecap="round" />
        <path d="M403 37L440 43 415 80Z" fill="#f40000" />
        <path d="M403 37L298 178" stroke="#f40000" stroke-width="7" />
        <path d="M275 207L286 172 305 188Z" fill="#f40000" />
        <path d="M391 245L655 248" stroke="#f40000" stroke-width="3" />
        <path d="M652 242L669 248 652 254Z" fill="#f40000" />
        <rect x="275" y="552" width="127" height="44" fill="none" stroke="#f40000" stroke-width="6" />
      </svg>
    `;
  }
}
